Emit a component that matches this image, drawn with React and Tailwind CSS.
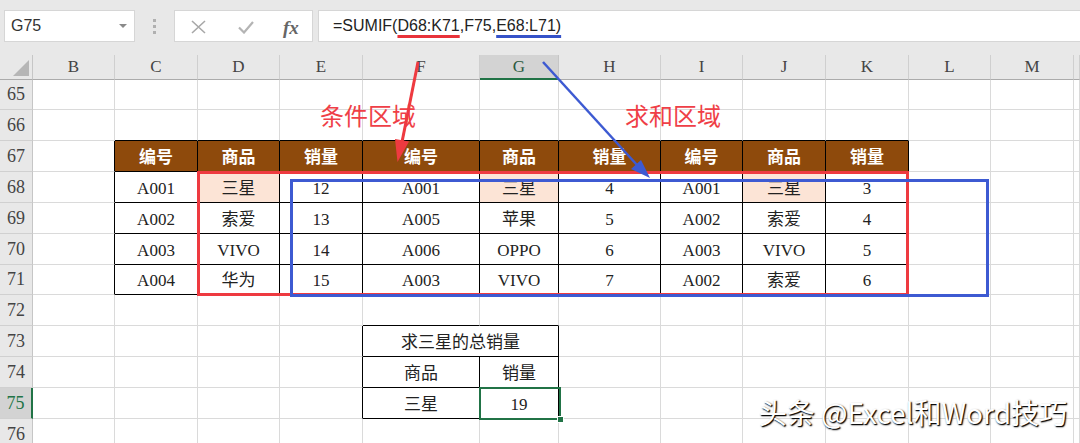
import React from 'react';

const COLS = [
  ['B', 82], ['C', 83], ['D', 82], ['E', 83], ['F', 117], ['G', 79], ['H', 102],
  ['I', 82], ['J', 83], ['K', 83], ['L', 82], ['M', 83], ['', 6],
];

const ROWS = [
  [65, 30], [66, 31], [67, 31], [68, 31], [69, 31], [70, 31], [71, 30],
  [72, 31], [73, 31], [74, 31], [75, 31], [76, 31],
];

const MAIN = [
  ['编号', '商品', '销量', '编号', '商品', '销量', '编号', '商品', '销量'],
  ['A001', '三星', '12', 'A001', '三星', '4', 'A001', '三星', '3'],
  ['A002', '索爱', '13', 'A005', '苹果', '5', 'A002', '索爱', '4'],
  ['A003', 'VIVO', '14', 'A006', 'OPPO', '6', 'A003', 'VIVO', '5'],
  ['A004', '华为', '15', 'A003', 'VIVO', '7', 'A002', '索爱', '6'],
];

const SMALL = {
  '73-4': '求三星的总销量',
  '74-4': '商品',
  '74-5': '销量',
  '75-4': '三星',
  '75-5': '19',
};

const serif = "font-['Liberation_Serif','Noto_Sans_CJK_SC',serif]";

function inTable(r, ci) {
  if (r >= 67 && r <= 71 && ci >= 1 && ci <= 9) return true;
  if (r >= 73 && r <= 75 && ci >= 4 && ci <= 5) return true;
  return false;
}

function cellText(r, ci) {
  if (r >= 67 && r <= 71 && ci >= 1 && ci <= 9) return MAIN[r - 67][ci - 1];
  return SMALL[`${r}-${ci}`] || '';
}

function Cell({ r, ci, width }) {
  const text = cellText(r, ci);
  const rightDark = inTable(r, ci) || inTable(r, ci + 1);
  const bottomDark = inTable(r, ci) || inTable(r + 1, ci);
  const head = r === 67 && inTable(r, ci);
  const hi = r === 68 && text === '三星';

  return (
    <div
      className={[
        'shrink-0 h-full flex items-center justify-center pt-[3px] border-r border-b text-[17px]',
        rightDark ? 'border-r-black' : 'border-r-[#dadada]',
        bottomDark ? 'border-b-black' : 'border-b-[#dadada]',
        head ? 'bg-[#8e4a0c] text-white font-bold' : hi ? 'bg-[#fce4d6] text-[#222]' : 'bg-white text-[#222]',
      ].join(' ')}
      style={{ width }}
    >
      {text}
    </div>
  );
}

function FormulaBar() {
  return (
    <div className="h-[55px] flex items-start pt-[10px] pl-[4px]">
      <div className="w-[131px] h-[32px] bg-white border border-[#d6d6d6] flex items-center pl-[6px] relative">
        <span className="text-[16px] text-[#333] font-['Liberation_Sans',sans-serif]">G75</span>
        <svg className="absolute left-[114px] top-[13px]" width="8" height="5" viewBox="0 0 8 5">
          <path d="M0 0 L8 0 L4 4 Z" fill="#8a8a8a" />
        </svg>
      </div>
      <div className="w-[39px] h-[32px] flex flex-col items-center justify-center gap-[3px]">
        <span className="w-[3px] h-[3px] bg-[#b0b0b0]" />
        <span className="w-[3px] h-[3px] bg-[#b0b0b0]" />
        <span className="w-[3px] h-[3px] bg-[#b0b0b0]" />
      </div>
      <div className="w-[139px] h-[32px] bg-white border border-[#d6d6d6] flex items-center relative">
        <svg className="absolute left-[16px] top-[9px]" width="15" height="14" viewBox="0 0 15 14">
          <path d="M1 1 L14 13 M14 1 L1 13" stroke="#a8a8a8" strokeWidth="1.6" fill="none" />
        </svg>
        <svg className="absolute left-[63px] top-[10px]" width="16" height="13" viewBox="0 0 16 13">
          <path d="M1 6.5 L6 11.5 L15 1" stroke="#b4b4b4" strokeWidth="2.2" fill="none" />
        </svg>
        <span className="absolute left-[108px] top-[3px] italic font-bold text-[19px] text-[#666] font-['Liberation_Serif',serif]">
          fx
        </span>
      </div>
      <div className="ml-[5px] flex-1 h-[32px] bg-white border border-r-0 border-[#d6d6d6] flex items-center pl-[14px]">
        <span className="text-[16px] text-[#222] font-['Liberation_Sans',sans-serif] whitespace-pre">
          =SUMIF(
          <span className="underline decoration-3 underline-offset-4 decoration-[#e8333a]">D68:K71</span>
          ,F75,
          <span className="underline decoration-3 underline-offset-4 decoration-[#3552c8]">E68:L71)</span>
        </span>
      </div>
    </div>
  );
}

function Sheet() {
  return (
    <div className={serif}>
      <div className="flex h-[25px]">
        <div className="w-[33px] shrink-0 h-full bg-[#e8e8e8] border-r border-r-[#c6c6c6] border-b border-b-[#ababab] relative">
          <svg className="absolute left-[12px] top-[4px]" width="18" height="18" viewBox="0 0 18 18">
            <path d="M17 1 L17 17 L1 17 Z" fill="#b6b6b6" />
          </svg>
        </div>
        {COLS.map(([k, w]) => (
          <div
            key={k || 'N'}
            className={
              k === 'G'
                ? 'shrink-0 h-full flex items-center justify-center bg-[#d3d3d3] text-[#2b5a40] text-[17px] border-r border-r-[#c6c6c6] border-b-2 border-b-[#217346]'
                : 'shrink-0 h-full flex items-center justify-center bg-[#e8e8e8] text-[#444] text-[17px] border-r border-r-[#cfcfcf] border-b border-b-[#ababab]'
            }
            style={{ width: w }}
          >
            {k}
          </div>
        ))}
      </div>
      {ROWS.map(([r, h]) => (
        <div key={r} className="flex" style={{ height: h }}>
          <div
            className={
              r === 75
                ? 'w-[33px] shrink-0 h-full flex items-end justify-center pb-[1px] bg-[#d3d3d3] text-[#217346] text-[18px] border-r-2 border-r-[#217346] border-b border-b-[#d0d0d0]'
                : 'w-[33px] shrink-0 h-full flex items-end justify-center pb-[1px] bg-[#e8e8e8] text-[#444] text-[18px] border-r border-r-[#c6c6c6] border-b border-b-[#d0d0d0]'
            }
          >
            {r}
          </div>
          {COLS.map(([k, w], ci) => {
            if (r === 73 && ci === 5) return null;
            const width = r === 73 && ci === 4 ? w + COLS[5][1] : w;
            return <Cell key={ci} r={r} ci={ci} width={width} />;
          })}
        </div>
      ))}
    </div>
  );
}

export default function App() {
  return (
    <div className="w-[1080px] h-[443px] overflow-hidden bg-[#e8e8e8] relative">
      <FormulaBar />
      <Sheet />

      {/* region labels */}
      <div className="absolute left-[320px] top-[103px] text-[24px] leading-none text-[#ef3f47] font-['Noto_Sans_CJK_SC',sans-serif]">
        条件区域
      </div>
      <div className="absolute left-[625px] top-[103px] text-[24px] leading-none text-[#ef3f47] font-['Noto_Sans_CJK_SC',sans-serif]">
        求和区域
      </div>

      {/* selection of G75 */}
      <div className="absolute left-[479px] top-[387px] w-[82px] h-[33px] border-2 border-[#217346]">
        <div className="absolute right-[-5px] bottom-[-5px] w-[7px] h-[7px] bg-[#217346] border border-white" />
      </div>

      {/* annotations */}
      <svg className="absolute left-0 top-0 pointer-events-none" width="1080" height="443" viewBox="0 0 1080 443">
        <rect x="198.5" y="172.5" width="709" height="122" fill="none" stroke="#ee3a40" strokeWidth="3" />
        <rect x="291.5" y="180.5" width="696" height="115" fill="none" stroke="#3d5ad2" strokeWidth="3" />
        <line x1="418" y1="62" x2="402" y2="142" stroke="#ee3a40" strokeWidth="3" />
        <path d="M397.5 162 L395 139 L409 141.5 Z" fill="#ee3a40" />
        <line x1="543" y1="62" x2="637" y2="165" stroke="#3d5ad2" strokeWidth="2.5" />
        <path d="M650 178 L631 169 L641 160 Z" fill="#3d5ad2" />
      </svg>

      {/* watermark */}
      <div className="absolute right-[13px] top-[398px] text-[28px] leading-none text-white font-['Noto_Sans_CJK_SC',sans-serif] whitespace-nowrap [text-shadow:1px_1px_1px_#000,1px_1px_2px_rgba(0,0,0,0.7)]">
        头条 @Excel和Word技巧
      </div>
    </div>
  );
}
